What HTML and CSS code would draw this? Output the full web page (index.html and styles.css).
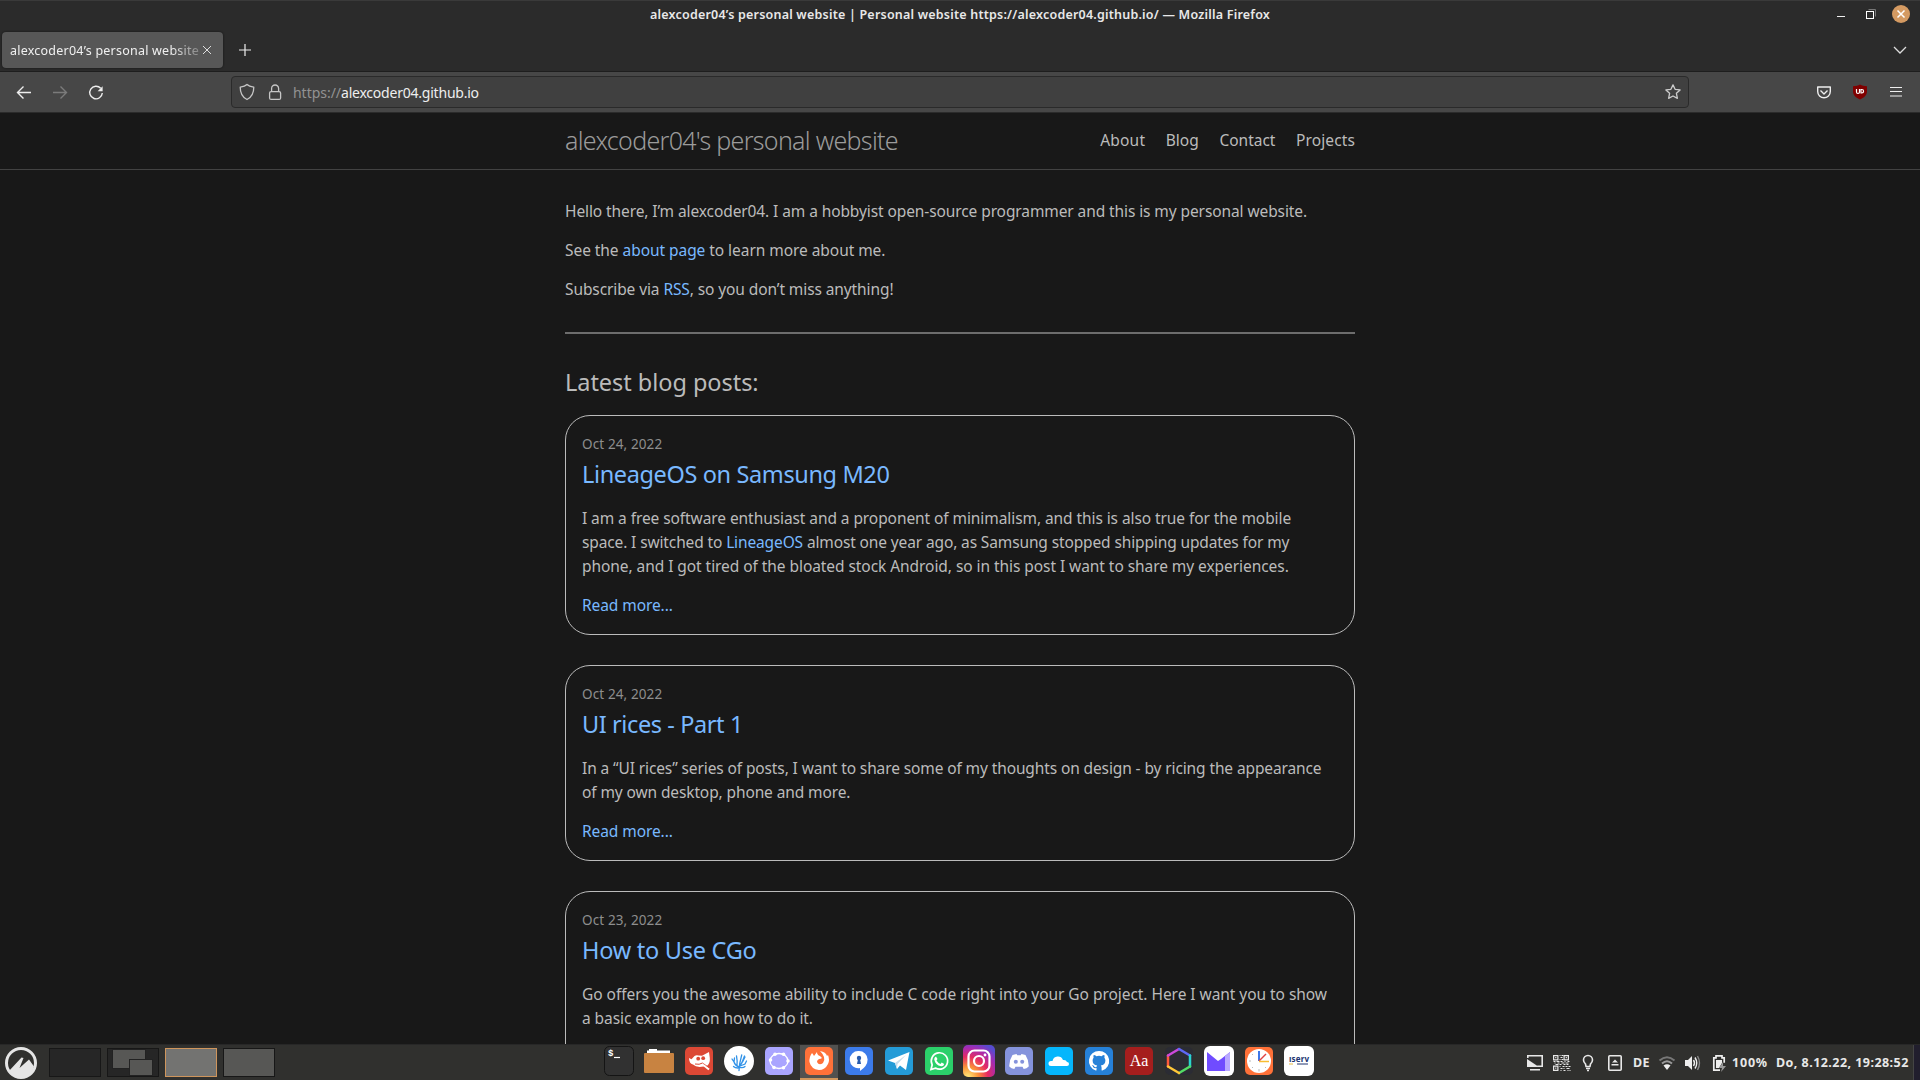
FILE: index.html
```html
<!DOCTYPE html>
<html lang="en">
<head>
<meta charset="utf-8">
<title>alexcoder04's personal website</title>
<link rel="stylesheet" href="styles.css">
</head>
<body>
<div class="titlebar">
  <span class="side"></span>
  <span class="wtitle">alexcoder04’s personal website | Personal website https://alexcoder04.github.io/ — Mozilla Firefox</span>
  <svg class="side controls" width="90" height="28" viewBox="0 0 90 28" fill="none"><path d="M7 16.500h8" stroke="#eee"/><path d="M38.500 9.500h7v7" stroke="#777"/><rect x="36.500" y="11.500" width="7" height="7" stroke="#fff"/><circle cx="71" cy="14" r="9" fill="#d49a62"/><path d="M67.500 10.500l7 7m0-7l-7 7" stroke="#fff" stroke-width="1.500"/></svg>
</div>
<div class="tabbar">
  <div class="tab"><span class="tablabel">alexcoder04’s personal website</span><svg width="10" height="10" viewBox="0 0 10 10"><path d="M1 1l8 8m0-8l-8 8" stroke="#ddd" fill="none"/></svg></div>
  <svg class="newtab" width="12" height="12" viewBox="0 0 12 12"><path d="M6 0v12M0 6h12" stroke="#eee" stroke-width="1.200"/></svg>
  <svg class="alltabs" width="14" height="8" viewBox="0 0 14 8"><path d="M1 1l6 6 6-6" stroke="#ddd" stroke-width="1.300" fill="none"/></svg>
</div>
<div class="toolbar">
  <svg width="231" height="40" viewBox="0 0 231 40" fill="none" stroke="#eee" stroke-width="1.400"><path d="M31 20.500H17.500M23.500 14.500l-6 6 6 6"/><path d="M53 20.500h13.500M60.500 14.500l6 6-6 6" stroke="#7b7b7b"/><path d="M100.700 16.300a6.300 6.300 0 1 0 1.600 4.700"/><path d="M102.600 14.300v5h-5z" fill="#eee" stroke="none"/></svg>
  <div class="urlbar">
    <svg width="61" height="30" viewBox="0 0 61 30" fill="none" stroke="#c6c6c6" stroke-width="1.300"><path d="M15 7.500c2 2 4.500 2.300 6.800 2.600 0 6-1.800 10.200-6.800 12.400-5-2.200-6.800-6.400-6.800-12.400 2.300-.3 4.800-.6 6.800-2.600z" stroke-linejoin="round"/><rect x="37.600" y="14.600" width="11" height="7.800" rx="1.500"/><path d="M39.600 14.500v-3a3.500 3.500 0 0 1 7 0v3"/></svg>
    <span class="url"><span class="scheme">https://</span>alexcoder04.github.io</span>
    <svg class="star" width="16" height="16" viewBox="0 0 16 16" fill="none" stroke="#ccc" stroke-width="1.300" stroke-linejoin="round"><path d="M8 .9l2.100 4.400 5 .6-3.700 3.400 1 5L8 12l-4.400 2.300 1-5L.9 5.900l5-.6z"/></svg>
  </div>
  <svg class="ext" width="88" height="40" viewBox="0 0 88 40" fill="none"><path d="M2.700 15h12.600v4.500a6.300 6.300 0 0 1-12.600 0zM5.500 18.500L9 22l3.500-3.500" stroke="#eee" stroke-width="1.400" stroke-linejoin="round"/><path d="M45 12.500c2 1.300 4 1.500 7 1.700v5c0 4-3 6.500-7 8.300-4-1.800-7-4.300-7-8.300v-5c3-.2 5-.4 7-1.700z" fill="#800000"/><path d="M41.500 17v3q0 1.500 1.500 1.500t1.500-1.500v-3M46 17.500v3.500h.8a1.750 1.750 0 0 0 0-3.500z" stroke="#fff" stroke-width="1.200"/><path d="M75 15.500h12M75 19.500h12M75 24h12" stroke="#eee" stroke-width="1.200"/></svg>
</div>
<div class="page">
  <header><div class="wrap head"><span class="brand">alexcoder04's personal website</span><nav><span class="n1">About</span><span>Blog</span><span>Contact</span><span class="n4">Projects</span></nav></div></header>
  <main class="wrap">
    <p class="s10">Hello there, I’m alexcoder04. I am a hobbyist open-source programmer and this is my personal website.</p>
    <p class="s6">See the <a>about page</a> to learn more about me.</p>
    <p class="s11">Subscribe via <a>RSS</a>, so you don’t miss anything!</p>
    <hr>
    <h2>Latest blog posts:</h2>
    <article><div class="date">Oct 24, 2022</div><h3>LineageOS on Samsung M20</h3>
      <p><span class="s8">I am a free software enthusiast and a proponent of minimalism, and this is also true for the mobile</span><br><span class="s13">space. I switched to <a>LineageOS</a> almost one year ago, as Samsung stopped shipping updates for my</span><br><span class="s7">phone, and I got tired of the bloated stock Android, so in this post I want to share my experiences.</span></p>
      <p><a class="more">Read more...</a></p></article>
    <article><div class="date">Oct 24, 2022</div><h3 class="rices">UI rices - Part 1</h3>
      <p class="s12">In a “UI rices” series of posts, I want to share some of my thoughts on design - by ricing the appearance<br>of my own desktop, phone and more.</p>
      <p><a class="more">Read more...</a></p></article>
    <article class="last"><div class="date">Oct 23, 2022</div><h3 class="cgo">How to Use CGo</h3>
      <p><span class="s5">Go offers you the awesome ability to include C code right into your Go project. Here I want you to show</span><br><span class="s8">a basic example on how to do it.</span></p></article>
  </main>
</div>
<div class="taskbar">
  <div class="left">
    <svg width="32" height="32" viewBox="0 0 32 32"><circle cx="16" cy="16" r="14.500" fill="#30302e" stroke="#e5e5e5" stroke-width="3"/><path d="M3.500 24.500L16.500 10.500l2 .5-4 10 9.500-8.500L29 19.500A14 14 0 0 1 3.500 24z" fill="#e5e5e5"/></svg>
    <div class="ws"></div><div class="ws two"><i></i><i></i></div><div class="ws current"></div><div class="ws full"></div>
  </div>
  <div class="apps">
    <div><svg viewBox="0 0 32 32"><rect x="1.500" y="1.500" width="29" height="29" rx="5" fill="#313131" stroke="#141414"/><text x="5" y="11" class="term">$</text><path d="M11 12.500h6" stroke="#fff" stroke-width="1.200"/></svg></div>
    <div><svg viewBox="0 0 32 32"><path d="M4 8V5.500h2V4h8v1.500h13V8z" fill="#fff"/><rect x="1" y="8" width="30" height="20" rx="1" fill="#c88341"/></svg></div>
    <div><svg viewBox="0 0 32 32"><rect x="2" y="2" width="28" height="28" rx="5" fill="#dc4835"/><path d="M6 13l2.500 1.300 3-3.300q1.500-1 4-.5l3.500.3L26 7l.8 6q.5 5-2.300 7.500l-4 1q-7 1.500-10.500-2-4-1-4-6.500z" fill="#fff"/><circle cx="15.200" cy="13.700" r="1.900" fill="#dc4835"/><circle cx="20.200" cy="13.200" r="1.900" fill="#dc4835"/><path d="M12 19q4.500 1 7.500-1" fill="none" stroke="#dc4835"/><path d="M20.500 20l5.500 4.500" stroke="#fff" stroke-width="2"/><path d="M19.500 18l6.500 4.500" stroke="#dc4835" stroke-width=".8"/></svg></div>
    <div><svg viewBox="0 0 32 32"><circle cx="16" cy="16" r="15" fill="#fff"/><path d="M16 25.500l.7-7 2-8.500M16 22q-4-1.500-5-5l-2-3m2 3 .5-4m2.500 7q.5-4-.5-9m2 11q3.500-3 4.500-7l1.500-4m-4.500 10 5-2 1.500-3m-4 1 2.500-5M15 23q-3 0-4.500-1.500m7 1q3 .5 4.500-1" fill="none" stroke="#3293e8" stroke-width="1.300" stroke-linecap="round"/></svg></div>
    <div><svg viewBox="0 0 32 32"><rect x="2" y="2" width="28" height="28" rx="5" fill="#aaa5ff"/><ellipse cx="16" cy="16" rx="9" ry="7.500" fill="none" stroke="#fff" stroke-width="1.300"/><g fill="#fff"><circle cx="12" cy="9.200" r="1.800"/><circle cx="20.500" cy="9.200" r="1.800"/><circle cx="25" cy="16" r="1.800"/><circle cx="20.500" cy="22.800" r="1.800"/><circle cx="11" cy="22.500" r="1.800"/><circle cx="7.500" cy="15" r="1.800"/></g></svg></div>
    <div class="active"><svg viewBox="0 0 32 32"><rect x="2" y="2" width="28" height="28" rx="5" fill="#ff7139"/><path d="M9 8q1 1 2 3l3-4q0 3 3 4l2 2q-1 1-3 1-2 1-2 3 2 4 6 1 2-3 1-6-1-3-4-6 6 1 7 5l1-1q2 5 0 9-3 6-9 6-8-1-9.500-8Q6 12 9 8z" fill="#fff"/></svg></div>
    <div><svg viewBox="0 0 32 32"><rect x="2" y="2" width="28" height="28" rx="5" fill="#3c7bea"/><path d="M16 6a8.600 8.600 0 0 1 8.600 8.500q0 6.500-7.600 11.500v-3a8.600 8.600 0 1 1-1-17z" fill="#fff"/><circle cx="16" cy="13" r="2.200" fill="#285cae"/><path d="M15 14h2l1 5h-4z" fill="#285cae"/></svg></div>
    <div><svg viewBox="0 0 32 32"><rect x="2" y="2" width="28" height="28" rx="5" fill="#249bd7"/><path d="M5 15.500L26.500 7 23 25l-6-4.500-3 3.500-2-6z" fill="#fff"/><path d="M12 18L23 10l-8.500 9-.5 5z" fill="#c7dceb"/></svg></div>
    <div><svg viewBox="0 0 32 32"><rect x="2" y="2" width="28" height="28" rx="5" fill="#2bd06a"/><path d="M8 24.500l1.200-4.700a8.200 8.200 0 1 1 3.200 3.300z" fill="none" stroke="#fff" stroke-width="1.700"/><path d="M13 11.500l1.500 2.500-1 1.500q1.500 2.500 4 3.500l1.200-1.500 2.500 1.500q-.5 2.500-3 2.300-6-1-7-7 .2-2 1.800-2.800z" fill="#fff"/></svg></div>
    <div><svg viewBox="0 0 32 32"><defs><radialGradient id="ig" cx=".15" cy="1" r="1.150"><stop offset=".05" stop-color="#ffdc70"/><stop offset=".28" stop-color="#fb9237"/><stop offset=".55" stop-color="#e52a63"/><stop offset=".8" stop-color="#a42bb4"/><stop offset="1" stop-color="#574bd0"/></radialGradient></defs><rect width="32" height="32" rx="5" fill="url(#ig)"/><g fill="none" stroke="#fff" stroke-width="2.200"><rect x="5.500" y="5.500" width="21" height="21" rx="6"/><circle cx="16" cy="16" r="5"/></g><circle cx="22" cy="10" r="1.400" fill="#fff"/></svg></div>
    <div><svg viewBox="0 0 32 32"><rect x="2" y="2" width="28" height="28" rx="5" fill="#8593dc"/><path d="M9.500 10l4-1 .8 1.300h3.400l.8-1.300 4 1q3.500 5.500 3.200 11.500-2 2-5 2.500l-1.200-2.300h-7L11.300 24q-3-.5-5-2.500Q6 15.500 9.500 10z" fill="#fff"/><circle cx="12.800" cy="16.800" r="2" fill="#8593dc"/><circle cx="19.200" cy="16.800" r="2" fill="#8593dc"/></svg></div>
    <div><svg viewBox="0 0 32 32"><rect x="2" y="2" width="28" height="28" rx="5" fill="#05b6fc"/><path d="M8 21a2.500 2.500 0 0 1 0-5h1.500a5.500 5.500 0 0 1 10.500-1q3-.5 4 2 2 0 2 2t-2 2z" fill="#fff"/></svg></div>
    <div><svg viewBox="0 0 32 32"><rect x="2" y="2" width="28" height="28" rx="5" fill="#2681d8"/><path d="M16 6a10 10 0 0 0-3.200 19.500c.5 0 .7-.2.700-.6v-1.800c-2.800.6-3.400-1.200-3.600-1.700-.3-.7-.7-1-1.200-1.400 1.500-.3 2 1 2.500 1.500.6.700 1.500.8 2.300.4.100-.7.400-1.100.7-1.400-3-.4-4.600-1.800-4.600-5 0-1.100.4-2 1-2.700-.3-.9-.2-1.800.1-2.700 1 0 1.900.5 2.700 1.100a9 9 0 0 1 5.200 0c.8-.6 1.700-1.100 2.700-1.100.3.900.4 1.800.1 2.700.6.700 1 1.600 1 2.700 0 3.200-1.600 4.600-4.600 5 .5.400.8 1.200.8 2.300v2.100c0 .4.200.7.700.6A10 10 0 0 0 16 6z" fill="#fff"/></svg></div>
    <div><svg viewBox="0 0 32 32"><rect x="2" y="2" width="28" height="28" rx="5" fill="#a51e1d"/><text x="16" y="20.500" text-anchor="middle" class="dict">Aa</text></svg></div>
    <div><svg viewBox="0 0 32 32" fill="none" stroke-width="2.500" stroke-linecap="round"><rect x="2" y="2" width="28" height="28" rx="5" fill="#2b2c34"/><path d="M5 10.500v11" stroke="#ff593b"/><path d="M5 10.500l11-6.500" stroke="#cc49dc"/><path d="M16 4l11 6.500" stroke="#5e68f5"/><path d="M27 10.500v11" stroke="#29d4cf"/><path d="M27 21.500L16 28" stroke="#53dd66"/><path d="M16 28L5 21.500" stroke="#ffc638"/></svg></div>
    <div><svg viewBox="0 0 32 32"><rect x="1" y="1" width="30" height="30" rx="6" fill="#fff"/><path d="M4 7l11 9 3-2 9-7v19H4z" fill="#704cff"/><path d="M22 11l5-4v19h-5z" fill="#b9a9ff"/></svg></div>
    <div><svg viewBox="0 0 32 32"><rect x="2" y="2" width="28" height="28" rx="5" fill="#ff7138"/><circle cx="16" cy="16" r="12" fill="#fff"/><path d="M16 6v10" stroke="#3e77e8" stroke-width="2"/><path d="M16 16l7-7" stroke="#e04444" stroke-width="1.500"/><path d="M16 16.500h10" stroke="#f8bd32" stroke-width="1.500"/><path d="M16 24v2.500M6 16h2M9 9l1 1M9 23l1-1m13 1-1-1" stroke="#bbb"/></svg></div>
    <div><svg viewBox="0 0 32 32"><rect x="1" y="1" width="30" height="30" rx="6" fill="#fff"/><text x="6" y="17" class="iserv" textLength="20">ıserv</text><path d="M14 19h11" stroke="#203471"/><path d="M6 19h4" stroke="#e8bd45"/></svg></div>
  </div>
  <div class="tray">
    <svg width="128" height="32" viewBox="1515 1046 128 32" fill="none" stroke="#e8e8e8" stroke-width="1.600"><path d="M1527.800 1057v-2.200h14.400v10.400h-5M1530 1068.700h10"/><path d="M1527 1058v8h12z" fill="#e8e8e8" stroke="none"/><g stroke-width="1.200"><path d="M1553.600 1054.600h4.300v4.300h-4.300zM1564.100 1054.600h4.300v4.300h-4.300zM1553.600 1065.100h4.300v4.300h-4.300zM1555.200 1056.700h1.200M1565.700 1056.700h1.200M1555.200 1067.200h1.200"/><path d="M1559.500 1054.500h1m1 0h2m-3 2h2m-3 2h1m1 0h2m-10 2h2m1 0h3m1 0h2m2 0h1m2 0h2m-15 1.500h1m2 0h2m2 0h3m1 0h3m-13 1.500h3m1 0h2m2 0h2m1 0h2m-9 2h1m2 0h2m1 0h2m1 0h2m-10 2h2m1 0h1m2 0h3m-9 2h1m2 0h2m2 0h1m1 0h1"/></g><path d="M1585.500 1063q-2-2-2-4a4.500 4.500 0 0 1 9 0q0 2-2 4l-.5 2.500h-4zM1586 1067.500h4M1587 1069.500h2"/><rect x="1608.800" y="1054.800" width="12.400" height="14.400" rx="1"/><path d="M1612 1061.500l3-3 3 3zM1611.500 1063h7v1.500h-7z" fill="#e8e8e8" stroke="none"/></svg>
    <span class="t de">DE</span>
    <svg width="70" height="32" viewBox="1657 1046 70 32" fill="none"><path d="M1659.500 1059.500q7.500-6.500 15 0" stroke="#777" stroke-width="2"/><path d="M1662 1062.500q5-4.500 10 0" stroke="#999" stroke-width="2"/><path d="M1663.500 1064.500q3.500-2.500 7 0l-3.500 4.500z" fill="#eee"/><path d="M1685 1059h3l4-4v14l-4-4h-3z" fill="#eee"/><path d="M1693.500 1059q2 3 0 6m1.500-8.500q3.500 5.500 0 11" stroke="#eee" stroke-width="1.400"/><path d="M1697.500 1055q4 7 0 14" stroke="#888" stroke-width="1.400"/><path d="M1720 1069.200h-6.200v-12.400h2.200v-2h6v2h2.200v5" stroke="#eee" stroke-width="1.700"/><path d="M1716 1059h6v3l-3 5h-3z" fill="#eee"/><path d="M1723 1061l-4 6h3l-1 4 5-6h-3z" fill="#999"/></svg>
    <span class="t pct">100%</span>
    <span class="t clock">Do, 8.12.22, 19:28:52</span>
    <div class="edge"></div>
  </div>
</div>
</body>
</html>
```
FILE: styles.css
```css
* { box-sizing: border-box; }
body { margin: 0; width: 1920px; height: 1080px; overflow: hidden; display: flex; flex-direction: column; background: #181818; font-family: "Noto Sans", "Open Sans", sans-serif; color: #bbb; }
svg { display: block; flex: none; }

/* Window frame */
.titlebar { height: 28px; flex: none; display: flex; justify-content: space-between; background: #2b2b2b; border-top: 1px solid #3a3a3a; }
.side { width: 90px; }
.controls { margin-top: -1px; }
.wtitle { font-size: 12.500px; font-weight: 600; line-height: 27px; letter-spacing: .21px; color: #e8e8e8; white-space: nowrap; }
.tabbar { height: 44px; flex: none; display: flex; align-items: center; padding: 0 13px 0 2px; background: #2b2b2b; border-bottom: 1px solid #1e1e1e; }
.tab { width: 221px; height: 36px; display: flex; align-items: center; gap: 3px; margin-top: 1px; padding-left: 8px; border-radius: 4px; background: #575757; box-shadow: 0 0 2px #111; color: #f0f0f0; font-size: 12.500px; }
.tablabel { width: 189px; overflow: hidden; white-space: nowrap; letter-spacing: .226px; -webkit-mask-image: linear-gradient(to right, #000 160px, rgba(0,0,0,.3)); }
.newtab { margin-left: 16px; }
.alltabs { margin-left: auto; }
.toolbar { height: 41px; flex: none; display: flex; align-items: flex-start; background: #474747; border-bottom: 1px solid #2b2b2b; }
.urlbar { width: 1458px; height: 32px; margin-top: 4px; display: flex; align-items: center; padding-right: 7px; border: 1px solid #2a2a2a; border-radius: 4px; background: #404040; }
.url { font-size: 14px; letter-spacing: -.22px; color: #eee; white-space: nowrap; }
.scheme { letter-spacing: -.03px; color: #929292; }
.star { margin-left: auto; }
.ext { margin-left: 126px; }

/* Web page */
.page { flex: 1; min-height: 0; overflow: hidden; font-size: 15.500px; line-height: 24px; }
.wrap { width: 790px; margin: 0 auto; }
header { height: 57px; border-bottom: 1px solid #424242; }
.head { display: flex; justify-content: space-between; height: 54px; align-items: center; }
.brand { font-size: 25px; font-weight: 300; letter-spacing: -.69px; color: #9b9b9b; }
nav { display: flex; gap: 20.600px; }
.n1 { letter-spacing: .2px; }
.n4 { letter-spacing: .11px; }
main { padding-top: 29px; }
p { margin: 0 0 15px; white-space: nowrap; }
a, h3 { color: #79b8ff; }
hr { margin: 31px 0 30px; border: 0; height: 2px; background: #6d6d6d; }
h2, h3 { margin: 0 0 15px; font-weight: 400; font-size: 23.500px; line-height: 36px; }
h2 { letter-spacing: -.04px; }
h3 { margin-bottom: 14px; letter-spacing: -.37px; }
.rices { letter-spacing: -.4px; }
.cgo { letter-spacing: -.25px; }
article { border: 1px solid #bbb; border-radius: 25px; padding: 16px 16px 2px; margin-bottom: 30px; }
.last { height: 200px; }
.date { font-size: 13.500px; line-height: 24px; letter-spacing: .12px; color: #8e8e8e; }
.more { letter-spacing: -.08px; }
.s5 { letter-spacing: -.046px; }
.s6 { letter-spacing: -.055px; }
.s7 { letter-spacing: -.062px; }
.s8 { letter-spacing: -.08px; }
.s10 { letter-spacing: -.097px; }
.s11 { letter-spacing: -.1px; }
.s12 { letter-spacing: -.115px; }
.s13 { letter-spacing: -.129px; }

/* Desktop panel */
.taskbar { height: 36px; flex: none; display: flex; background: #30302e; border-top: 1px solid #272727; }
.left, .tray { display: flex; align-items: center; }
.left { width: 600px; padding-left: 5px; gap: 6px; }
.left svg { margin-right: 6px; }
.ws { width: 52px; height: 29px; border: 1px solid #171717; background: #262626; }
.two { position: relative; }
.two i { position: absolute; left: 4px; top: 0; width: 34px; height: 20px; border: 1px solid #222; background: #575755; }
.two i + i { left: 21px; top: 10px; width: 24px; height: 17px; }
.current { border-color: #cf955c; background: #737371; }
.full { background: #575755; }
.apps { display: flex; gap: 2px; }
.apps > div { width: 38px; height: 35px; display: flex; justify-content: center; }
.apps svg { width: 32px; height: 32px; }
.apps .active { background: #52514f; border-bottom: 2px solid #cf955c; }
.term { font: bold 9px "Liberation Mono", monospace; fill: #fff; }
.dict { font: 16px "Liberation Serif", serif; fill: #fff; }
.iserv { font: bold 8px "Noto Sans", sans-serif; fill: #203471; }
.tray { width: 405px; margin-left: auto; }
.t { font-size: 12.500px; font-weight: 700; line-height: 34px; color: #e8e8e8; white-space: nowrap; }
.edge { width: 7px; height: 35px; margin-left: auto; background: #211e2d; border-left: 1px solid #444; }
.de { width: 24px; margin-left: -10px; letter-spacing: .42px; }
.pct { width: 44px; margin-left: 5px; letter-spacing: .8px; }
.clock { letter-spacing: .45px; }
```
